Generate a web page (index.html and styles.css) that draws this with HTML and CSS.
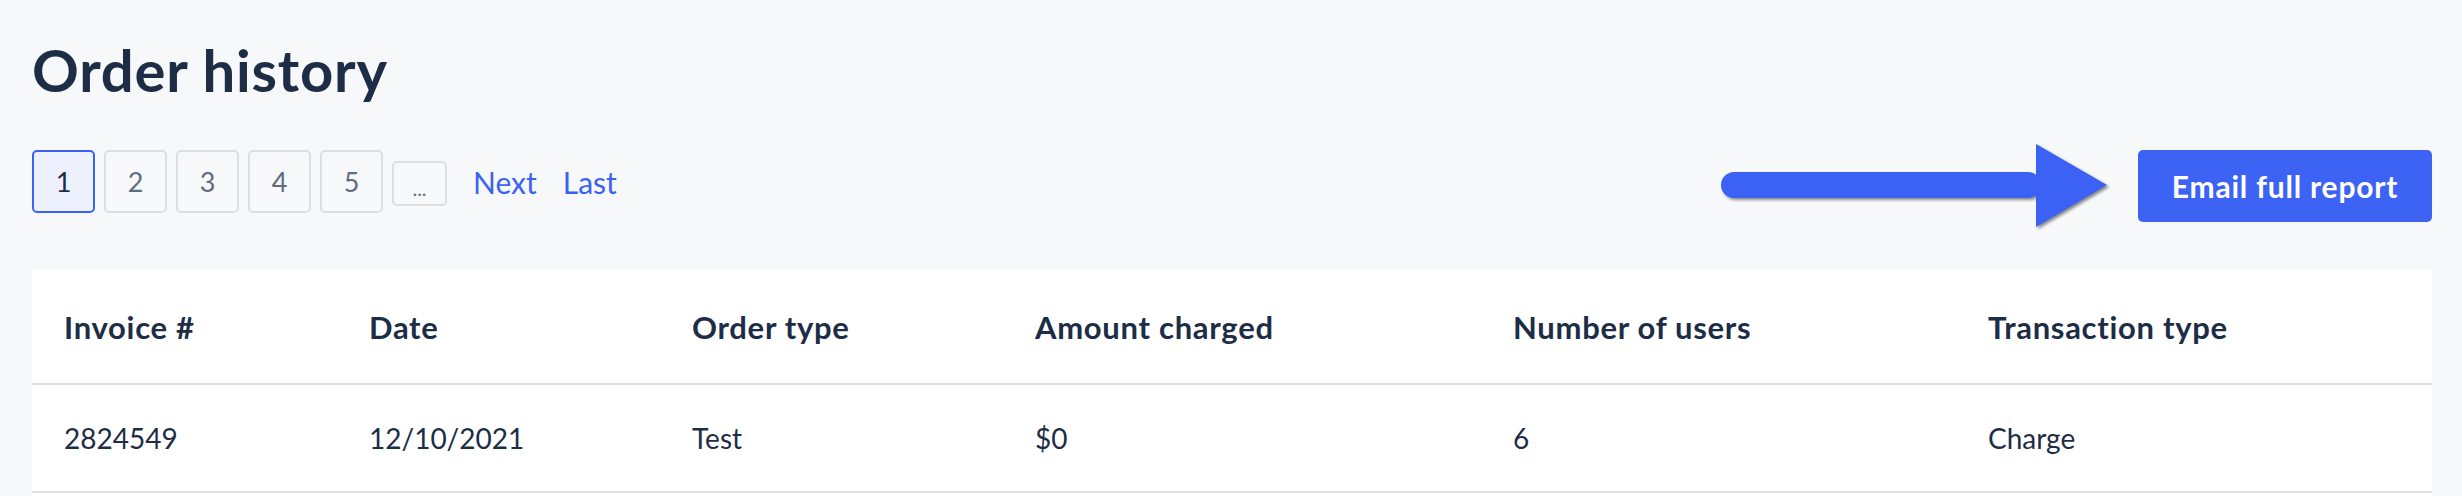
FILE: index.html
```html
<!DOCTYPE html>
<html lang="en">
<head>
<meta charset="utf-8">
<title>Order history</title>
<link rel="stylesheet" href="styles.css">
</head>
<body>
<main class="page">
  <h1 class="title">Order history</h1>
  <div class="toolbar">
    <nav class="pagination">
      <span class="page-box active">1</span>
      <span class="page-box">2</span>
      <span class="page-box">3</span>
      <span class="page-box">4</span>
      <span class="page-box">5</span>
      <span class="page-box ellipsis">...</span>
      <a class="page-link" href="#">Next</a>
      <a class="page-link" href="#">Last</a>
    </nav>
    <div class="actions">
      <svg class="arrow" width="392" height="90" viewBox="0 0 392 90" aria-hidden="true">
        <rect x="2" y="31" width="320" height="26" rx="13" fill="#3b62f5"/>
        <polygon points="317,3 388,44 317,86" fill="#3b62f5"/>
      </svg>
      <button class="btn-primary" type="button">Email full report</button>
    </div>
  </div>
  <div class="card">
    <table class="orders">
      <colgroup>
        <col class="c-invoice"><col class="c-date"><col class="c-type"><col class="c-amount"><col class="c-users"><col class="c-trans">
      </colgroup>
      <thead>
        <tr>
          <th>Invoice #</th>
          <th>Date</th>
          <th>Order type</th>
          <th>Amount charged</th>
          <th>Number of users</th>
          <th>Transaction type</th>
        </tr>
      </thead>
      <tbody>
        <tr>
          <td>2824549</td>
          <td>12/10/2021</td>
          <td>Test</td>
          <td>$0</td>
          <td>6</td>
          <td>Charge</td>
        </tr>
      </tbody>
    </table>
  </div>
</main>
</body>
</html>
```

FILE: styles.css
```css
* { box-sizing: border-box; }
html, body {
  margin: 0;
  background: #f7f8fa;
}
body {
  font-family: Lato, "Open Sans", "Liberation Sans", sans-serif;
  color: #1e2d46;
}
.page {
  padding: 36px 30px 0 32px;
}
.title {
  margin: 0;
  font-size: 58px;
  line-height: 68px;
  font-weight: 700;
  letter-spacing: 0.8px;
  color: #1e2d46;
}
.toolbar {
  margin-top: 46px;
  display: flex;
  justify-content: space-between;
  align-items: flex-start;
}
.pagination {
  display: flex;
  align-items: center;
  gap: 9px;
}
.page-box {
  width: 63px;
  height: 63px;
  display: flex;
  align-items: center;
  justify-content: center;
  border: 2px solid #dcdee2;
  border-radius: 5px;
  font-size: 27px;
  color: #606c7e;
  background: #f7f8fa;
}
.page-box.active {
  border-color: #3b62f5;
  background: #edf1fd;
  color: #1e2d46;
}
.page-box.ellipsis {
  width: 55px;
  height: 45px;
  margin-top: 3px;
  font-size: 20px;
  padding-bottom: 4px;
  align-items: flex-end;
}
.page-link {
  color: #3b62f5;
  text-decoration: none;
  font-size: 30px;
  margin-left: 17px;
}
.actions {
  display: flex;
  align-items: center;
  gap: 27px;
}
.arrow {
  display: block;
  margin: -9px 0;
  filter: drop-shadow(2px 2px 1.5px rgba(0, 0, 0, 0.45));
}
.btn-primary {
  width: 294px;
  height: 72px;
  border: 0;
  border-radius: 5px;
  background: #3d63f5;
  color: #fff;
  font-family: inherit;
  font-size: 30px;
  font-weight: 700;
  letter-spacing: 0.8px;
  padding: 0;
}
.card {
  margin-top: 48px;
  background: #fff;
  padding-bottom: 20px;
}
.orders {
  width: 100%;
  border-collapse: collapse;
  table-layout: fixed;
}
.c-invoice { width: 305px; }
.c-date { width: 323px; }
.c-type { width: 343px; }
.c-amount { width: 478px; }
.c-users { width: 475px; }
.c-trans { width: 476px; }
.orders th,
.orders td {
  text-align: left;
  padding: 0 32px;
  border-bottom: 2px solid #dfe0e4;
  white-space: nowrap;
}
.orders th {
  height: 114px;
  font-size: 31px;
  font-weight: 700;
  letter-spacing: 0.7px;
}
.orders td {
  height: 108px;
  font-size: 28px;
  font-weight: 400;
}
```
